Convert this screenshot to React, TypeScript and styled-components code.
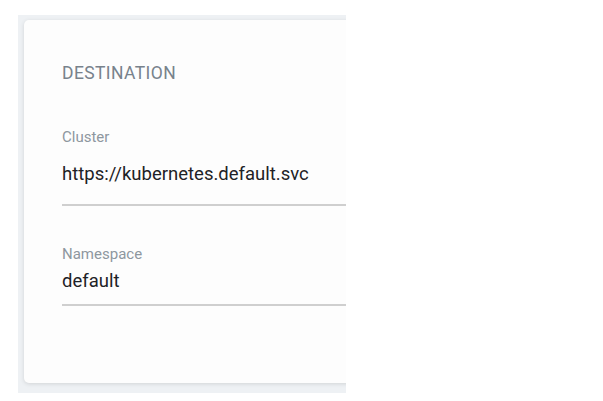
import styled, { createGlobalStyle } from 'styled-components';

const GlobalStyle = createGlobalStyle`
  html, body {
    margin: 0;
    padding: 0;
    background: #ffffff;
    font-family: Roboto, 'Liberation Sans', Arial, sans-serif;
  }
`;

const Page = styled.div`
  width: 603px;
  height: 401px;
  padding: 15px 0 0 18px;
  box-sizing: border-box;
`;

const Panel = styled.div`
  width: 328px;
  height: 378px;
  padding: 5px 0 10px 6px;
  box-sizing: border-box;
  background: #eef1f4;
  overflow: hidden;
`;

const Card = styled.section`
  width: 420px;
  height: 100%;
  box-sizing: border-box;
  padding: 42.5px 0 0 38px;
  background: #fdfdfd;
  border-radius: 5px;
  box-shadow: 0 1px 4px rgba(0, 0, 0, 0.12);
`;

const Title = styled.h3`
  margin: 0 0 45px;
  font-size: 17.5px;
  line-height: 20px;
  font-weight: 400;
  letter-spacing: 0.4px;
  text-transform: uppercase;
  color: #78828c;
`;

const Field = styled.div<{ $gap: number; $pad: number }>`
  display: flex;
  flex-direction: column;
  gap: ${(p) => p.$gap}px;
  padding-bottom: ${(p) => p.$pad}px;
  border-bottom: 2px solid #cfcfcf;
  margin-bottom: 39px;
`;

const Label = styled.label`
  font-size: 15px;
  line-height: 18px;
  color: #8e979f;
`;

const Value = styled.div`
  font-size: 18.5px;
  line-height: 22px;
  color: #1e2226;
`;

export default function App() {
  return (
    <>
      <GlobalStyle />
      <Page>
        <Panel>
          <Card>
            <Title>Destination</Title>
            <Field $gap={17} $pad={19.5}>
              <Label>Cluster</Label>
              <Value>https://kubernetes.default.svc</Value>
            </Field>
            <Field $gap={7} $pad={11.5}>
              <Label>Namespace</Label>
              <Value>default</Value>
            </Field>
          </Card>
        </Panel>
      </Page>
    </>
  );
}
